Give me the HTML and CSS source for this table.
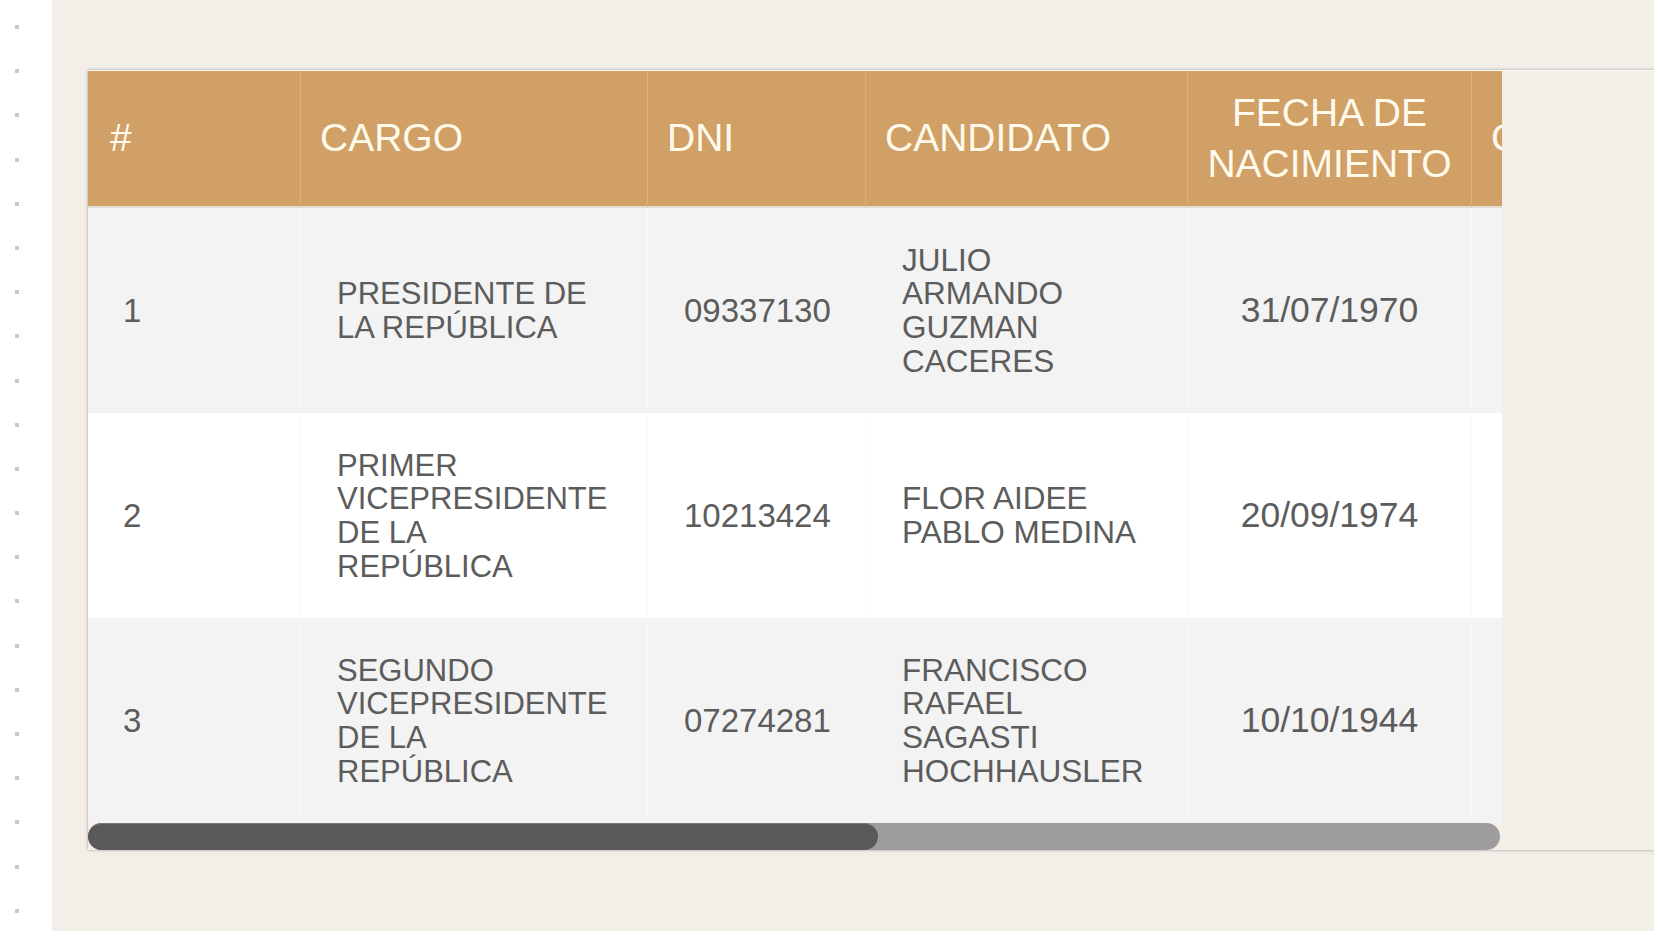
FILE: index.html
```html
<!DOCTYPE html>
<html lang="es">
<head>
<meta charset="utf-8">
<title>Candidatos</title>
<link rel="stylesheet" href="styles.css">
</head>
<body>
<div class="page">
  <aside class="rail">
    <span class="dot"></span><span class="dot"></span><span class="dot"></span><span class="dot"></span><span class="dot"></span><span class="dot"></span><span class="dot"></span>
    <span class="dot"></span><span class="dot"></span><span class="dot"></span><span class="dot"></span><span class="dot"></span><span class="dot"></span><span class="dot"></span>
    <span class="dot"></span><span class="dot"></span><span class="dot"></span><span class="dot"></span><span class="dot"></span><span class="dot"></span><span class="dot"></span>
  </aside>
  <main class="content">
    <section class="card">
      <div class="scroller">
        <table class="cands">
          <colgroup>
            <col class="c-num"><col class="c-cargo"><col class="c-dni"><col class="c-name"><col class="c-date"><col class="c-x1">
          </colgroup>
          <thead>
            <tr>
              <th class="hash">#</th>
              <th>CARGO</th>
              <th>DNI</th>
              <th>CANDIDATO</th>
              <th class="center">FECHA DE NACIMIENTO</th>
              <th class="clip">C</th>
            </tr>
          </thead>
          <tbody>
            <tr>
              <td class="num">1</td>
              <td class="cargo">PRESIDENTE DE LA REPÚBLICA</td>
              <td class="dni">09337130</td>
              <td class="name">JULIO ARMANDO GUZMAN CACERES</td>
              <td class="date">31/07/1970</td>
              <td></td>
            </tr>
            <tr>
              <td class="num">2</td>
              <td class="cargo">PRIMER VICEPRESIDENTE DE LA REPÚBLICA</td>
              <td class="dni">10213424</td>
              <td class="name">FLOR AIDEE PABLO MEDINA</td>
              <td class="date">20/09/1974</td>
              <td></td>
            </tr>
            <tr>
              <td class="num">3</td>
              <td class="cargo">SEGUNDO VICEPRESIDENTE DE LA REPÚBLICA</td>
              <td class="dni">07274281</td>
              <td class="name">FRANCISCO RAFAEL SAGASTI HOCHHAUSLER</td>
              <td class="date">10/10/1944</td>
              <td></td>
            </tr>
          </tbody>
        </table>
      </div>
      <div class="hscroll"><div class="hscroll-thumb"></div></div>
    </section>
  </main>
</div>
</body>
</html>
```

FILE: styles.css
```css
html, body {
  margin: 0;
  padding: 0;
  height: 100%;
  overflow: hidden;
  background: #f3eee8;
  font-family: "Liberation Sans", Arial, sans-serif;
}

.page {
  display: flex;
  height: 100vh;
}

.rail {
  flex: none;
  width: 52px;
  background: #ffffff;
  display: flex;
  flex-direction: column;
  align-items: flex-start;
  padding: 25px 0 0 15px;
  box-sizing: border-box;
  gap: 40.2px;
}

.dot {
  display: block;
  width: 4px;
  height: 4px;
  background: #cacaca;
}

.content {
  flex: 1;
  min-width: 0;
  padding: 70px 0 0 36px;
}

.card {
  margin-right: -40px;
  background: #f3eee8;
  border-top: 1px solid #fbf9f6;
  box-shadow: 0 0 3px rgba(0, 0, 0, 0.35);
}

.scroller {
  width: 1414px;
  overflow: hidden;
}

.cands {
  width: 1683px;
  table-layout: fixed;
  border-collapse: separate;
  border-spacing: 0;
}

.c-num { width: 212px; }
.c-cargo { width: 347px; }
.c-dni { width: 218px; }
.c-name { width: 322px; }
.c-date { width: 284px; }
.c-x1 { width: 300px; }

.cands th {
  box-sizing: border-box;
  height: 137px;
  padding: 17px 16px 17px 19px;
  background: #d0a066;
  color: #fffaeb;
  font-weight: normal;
  font-size: 39px;
  line-height: 50.7px;
  text-align: left;
  vertical-align: middle;
  border-left: 1px solid #dbb27f;
  border-bottom: 2px solid #e4ddd4;
}
.cands th:first-child {
  border-left: none;
}
.cands th.hash {
  padding-left: 22px;
}
.cands th.center {
  text-align: center;
  padding-left: 16px;
}

.cands td {
  box-sizing: border-box;
  height: 205px;
  padding: 35px 36px;
  color: #5c5c5c;
  font-size: 31px;
  line-height: 33.6px;
  vertical-align: middle;
  border-left: 1px solid rgba(255, 255, 255, 0.45);
}
.cands td:first-child {
  border-left: none;
}

.cands tbody tr:nth-child(odd) td {
  background: #f3f3f3;
}
.cands tbody tr:nth-child(even) td {
  background: #ffffff;
  border-left-color: #fafafa;
}

.cands td.num {
  font-size: 33px;
  padding-left: 35px;
}
.cands td.cargo {
  padding-right: 44px;
}
.cands td.dni {
  font-size: 33px;
}
.cands td.name {
  font-size: 31.5px;
  padding-right: 40px;
}
.cands td.date {
  font-size: 35.5px;
  text-align: center;
}

.hscroll {
  width: 1412px;
  height: 27px;
  background: #9d9d9d;
  border-radius: 14px;
  display: flex;
}

.hscroll-thumb {
  width: 790px;
  height: 27px;
  background: #595959;
  border-radius: 14px;
  border-top: 1px solid #7a7a7a;
  box-sizing: border-box;
}
```
